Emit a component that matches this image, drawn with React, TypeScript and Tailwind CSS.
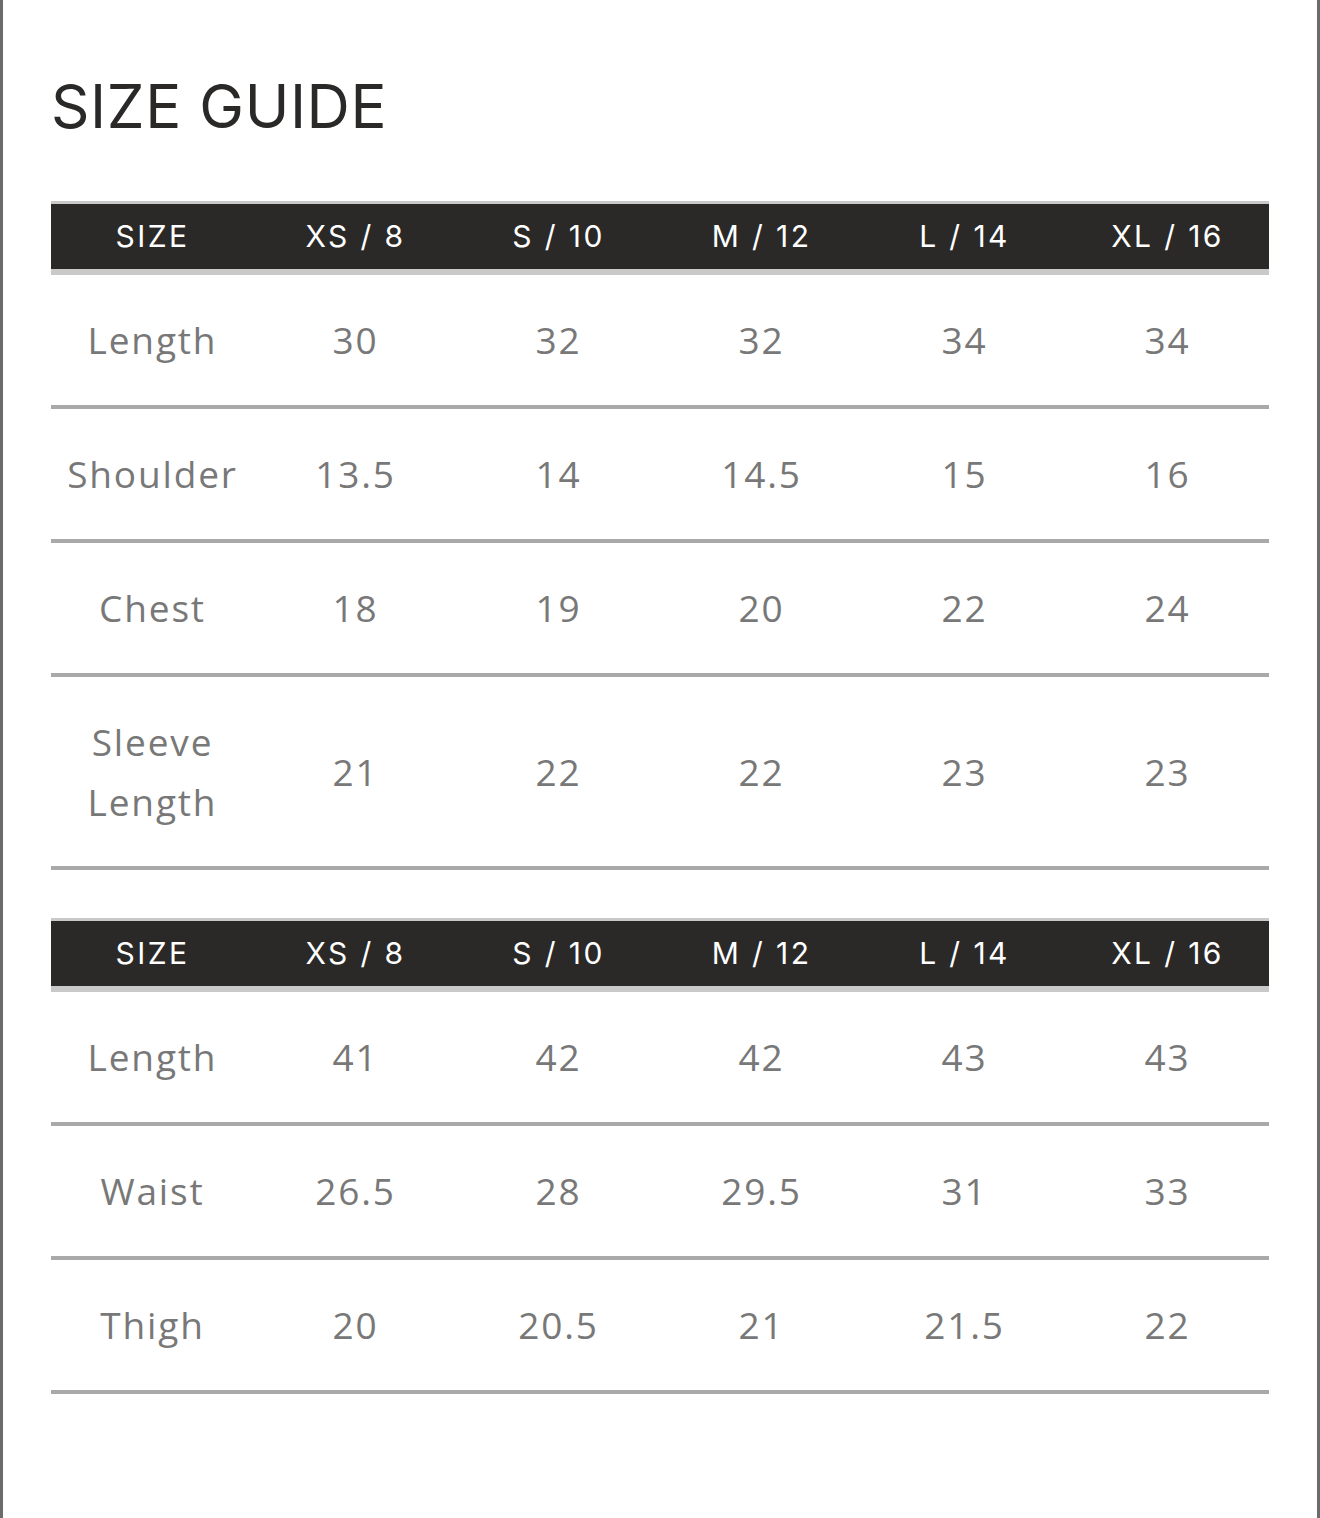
import React from "react";

const SIZES = ["XS / 8", "S / 10", "M / 12", "L / 14", "XL / 16"];

type Row = { label: React.ReactNode; values: string[]; tall?: boolean };

const top: Row[] = [
  { label: "Length", values: ["30", "32", "32", "34", "34"] },
  { label: "Shoulder", values: ["13.5", "14", "14.5", "15", "16"] },
  { label: "Chest", values: ["18", "19", "20", "22", "24"] },
  {
    label: (
      <>
        Sleeve
        <br />
        Length
      </>
    ),
    values: ["21", "22", "22", "23", "23"],
    tall: true,
  },
];

const bottom: Row[] = [
  { label: "Length", values: ["41", "42", "42", "43", "43"] },
  { label: "Waist", values: ["26.5", "28", "29.5", "31", "33"] },
  { label: "Thigh", values: ["20", "20.5", "21", "21.5", "22"] },
];

function Table({ rows }: { rows: Row[] }) {
  return (
    <div className="w-full">
      <div className="border-t-[3px] border-b-[6px] border-[#c9c9c9] bg-[#2a2928]">
        <div className="grid grid-cols-6 h-[65px] items-center text-white text-[30px] tracking-[0.08em] font-['Inter',sans-serif]">
          <div className="text-center">SIZE</div>
          {SIZES.map((s) => (
            <div key={s} className="text-center">
              {s}
            </div>
          ))}
        </div>
      </div>
      {rows.map((r, i) => (
        <div
          key={i}
          className={`grid grid-cols-6 items-center border-b-[4px] border-[#a9a9a9] text-[#787878] text-[37px] tracking-[0.05em] font-['Open_Sans',sans-serif] ${
            r.tall ? "h-[193px]" : "h-[134px]"
          }`}
        >
          <div className="text-center leading-[60px]">{r.label}</div>
          {r.values.map((v, j) => (
            <div key={j} className="text-center">
              {v}
            </div>
          ))}
        </div>
      ))}
    </div>
  );
}

export default function App() {
  return (
    <div className="min-h-[1518px] bg-white border-x-[3px] border-[#6b6b6b] px-[48px]">
      <h1 className="pt-[70px] text-[60px] leading-[72px] text-[#2a2928] tracking-[0.01em] font-['Inter',sans-serif] font-normal">
        SIZE GUIDE
      </h1>
      <div className="mt-[59px] flex flex-col gap-[48px]">
        <Table rows={top} />
        <Table rows={bottom} />
      </div>
    </div>
  );
}
